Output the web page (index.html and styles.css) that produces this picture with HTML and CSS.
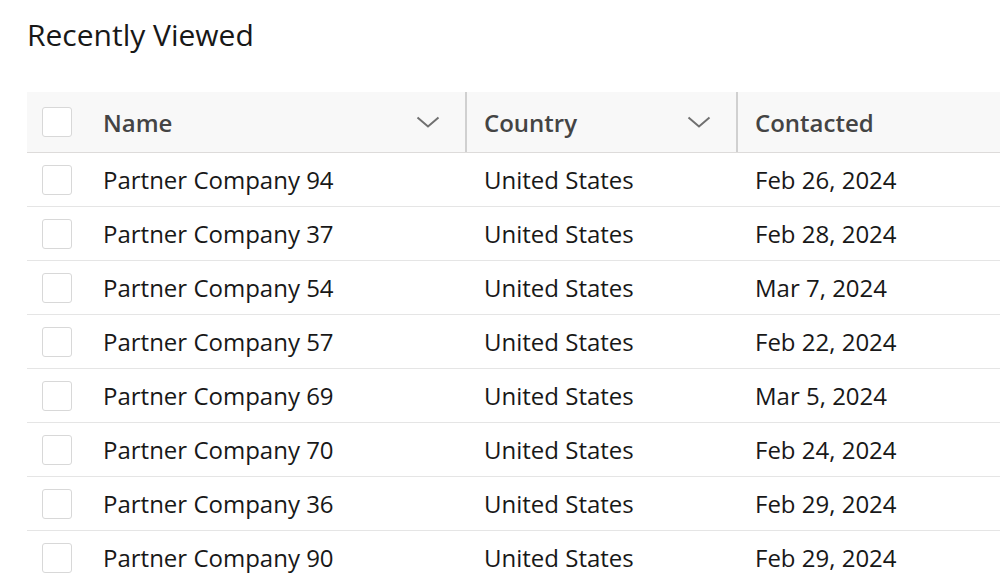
FILE: index.html
```html
<!DOCTYPE html>
<html lang="en">
<head>
    <meta charset="UTF-8">
    <meta name="viewport" content="width=device-width, initial-scale=1.0">
    <title>Recently Viewed</title>
    <link rel="stylesheet" href="styles.css">
</head>
<body>
    <!-- list view title -->
    <h1 class="title">Recently Viewed</h1>

    <!-- records table -->
    <div class="list">
        <table class="grid">
            <thead>
                <tr>
                    <th class="col-check"><span class="box"></span></th>
                    <th class="col-name">
                        <div class="head">
                            <span>Name</span>
                            <svg class="chev" viewBox="0 0 24 12"><path d="M1.5 1.5 L12 10.5 L22.5 1.5"/></svg>
                        </div>
                    </th>
                    <th class="col-country">
                        <div class="head">
                            <span>Country</span>
                            <svg class="chev" viewBox="0 0 24 12"><path d="M1.5 1.5 L12 10.5 L22.5 1.5"/></svg>
                        </div>
                    </th>
                    <th class="col-date">
                        <div class="head"><span>Contacted</span></div>
                    </th>
                </tr>
            </thead>
            <tbody>
                <tr><td class="col-check"><span class="box"></span></td><td>Partner Company 94</td><td>United States</td><td>Feb 26, 2024</td></tr>
                <tr><td class="col-check"><span class="box"></span></td><td>Partner Company 37</td><td>United States</td><td>Feb 28, 2024</td></tr>
                <tr><td class="col-check"><span class="box"></span></td><td>Partner Company 54</td><td>United States</td><td>Mar 7, 2024</td></tr>
                <tr><td class="col-check"><span class="box"></span></td><td>Partner Company 57</td><td>United States</td><td>Feb 22, 2024</td></tr>
                <tr><td class="col-check"><span class="box"></span></td><td>Partner Company 69</td><td>United States</td><td>Mar 5, 2024</td></tr>
                <tr><td class="col-check"><span class="box"></span></td><td>Partner Company 70</td><td>United States</td><td>Feb 24, 2024</td></tr>
                <tr><td class="col-check"><span class="box"></span></td><td>Partner Company 36</td><td>United States</td><td>Feb 29, 2024</td></tr>
                <tr><td class="col-check"><span class="box"></span></td><td>Partner Company 90</td><td>United States</td><td>Feb 29, 2024</td></tr>
            </tbody>
        </table>
    </div>
</body>
</html>
```

FILE: styles.css
```css
body {
    margin: 0;
    background: #fff;
    font-family: "Open Sans", "Noto Sans", sans-serif;
    color: #181818;
    overflow: hidden;
}
.title {
    margin: 0;
    padding: 15px 0 0 27px;
    height: 75px;
    box-sizing: border-box;
    font-size: 30px;
    font-weight: 400;
    line-height: 40px;
}
.list {
    padding: 17px 0 0 27px;
}
.grid {
    border-collapse: collapse;
    table-layout: fixed;
    width: 100%;
    font-size: 24px;
}
.grid th {
    height: 60px;
    padding: 0;
    background: #f8f8f8;
    border-bottom: 1px solid #dddbda;
    color: #444;
    font-weight: 600;
    text-align: left;
}
.grid td {
    height: 53px;
    padding: 0;
    border-bottom: 1px solid #e5e5e5;
    white-space: nowrap;
}
.col-check {
    width: 76px;
    padding-left: 15px !important;
    box-sizing: border-box;
}
.col-name { width: 364px; }
.col-country { width: 271px; }
.grid td:nth-child(3),
.grid td:nth-child(4) {
    padding-left: 17px;
}
.head {
    display: flex;
    align-items: center;
    justify-content: space-between;
    height: 60px;
    padding: 0 25px 0 17px;
    border-right: 2px solid #d0d0d0;
}
.col-name .head {
    padding-left: 0;
}
.col-date .head {
    border-right: none;
}
.box {
    display: block;
    width: 28px;
    height: 28px;
    border: 1px solid #d8d8d8;
    border-radius: 3px;
    background: #fff;
}
.chev {
    width: 24px;
    height: 12px;
    fill: none;
    stroke: #707070;
    stroke-width: 2;
}
```
